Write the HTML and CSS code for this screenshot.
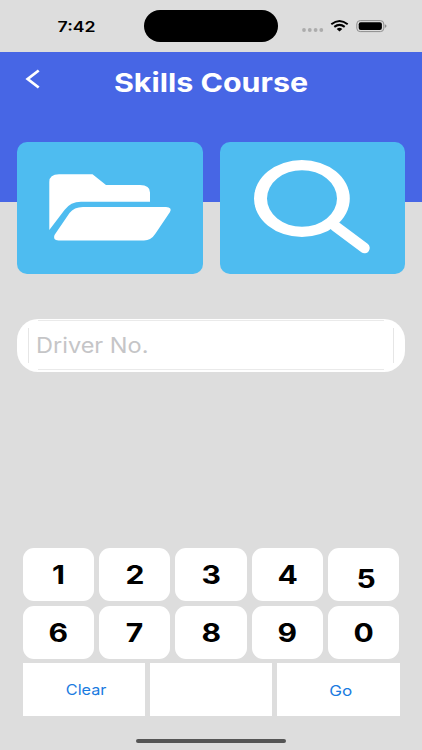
FILE: index.html
```html
<!DOCTYPE html>
<html lang="en">
<head>
    <meta charset="UTF-8">
    <meta name="viewport" content="width=device-width, initial-scale=1.0">
    <title>Skills Course</title>
    <link rel="stylesheet" href="styles.css">
</head>
<body>
    <div class="screen">
        <div class="status-bar">
            <div class="time"><span class="wide">7:42</span></div>
            <div class="island"></div>
            <svg class="status-icons" width="88" height="20" viewBox="0 0 88 20">
                <g fill="#acacac">
                    <circle cx="5" cy="14" r="1.9"/>
                    <circle cx="10.8" cy="14" r="1.9"/>
                    <circle cx="16.6" cy="14" r="1.9"/>
                    <circle cx="22.3" cy="14" r="1.9"/>
                </g>
                <g fill="none" stroke="#000" stroke-width="2">
                    <path d="M32.3 8.3Q40.5 1.7 48.7 8.3"/>
                    <path d="M35.3 10.9Q40.5 6.9 45.7 10.9"/>
                </g>
                <path d="M37.7 12.9Q40.5 10.8 43.3 12.9L40.5 15.4Z"/>
                <rect x="57.8" y="4.6" width="27" height="11" rx="3.4" fill="none" stroke="#8d8d8d"/>
                <rect x="59.7" y="6.2" width="23.2" height="7.8" rx="2"/>
                <path d="M85.9 8.2Q87.5 8.9 87.5 10.1Q87.5 11.3 85.9 12Z" fill="#8d8d8d"/>
            </svg>
        </div>

        <div class="header">
            <svg class="back" width="16" height="22" viewBox="0 0 16 22">
                <path d="M13.7 2.5L2.7 11L13.7 19.5" fill="none" stroke="#fff" stroke-width="2.8"/>
            </svg>
            <h1><span class="wide">Skills Course</span></h1>
        </div>

        <div class="cards">
            <div class="card">
                <svg width="185" height="132" viewBox="0 0 185 132" fill="#fff">
                    <path d="M32.3 88V40Q32.3 32.3 42 32.3H75.5L89 43H123Q133 43 133 50.5V59.7H64Q53.5 59.7 47.5 68Z"/>
                    <path d="M52.5 71Q57 65 66 65H149Q155.5 65.3 153 70L138.5 91.5Q134 98.5 127 98.5H41.5Q35.5 98 37.5 93Z"/>
                </svg>
            </div>
            <div class="card">
                <svg width="185" height="132" viewBox="0 0 185 132">
                    <path d="M115 84L144.5 106" stroke="#fff" stroke-width="10.5" stroke-linecap="round"/>
                    <path fill="#fff" fill-rule="evenodd" d="M34 56.5a47.9 38.5 0 1 0 95.8 0a47.9 38.5 0 1 0 -95.8 0zM47 56.5a35 28.3 0 1 0 70 0a35 28.3 0 1 0 -70 0z"/>
                </svg>
            </div>
        </div>

        <div class="driver">
            <div class="driver-field"><span class="wide">Driver No.</span></div>
        </div>

        <div class="keypad">
            <div class="key"><span class="wide">1</span></div>
            <div class="key"><span class="wide">2</span></div>
            <div class="key"><span class="wide">3</span></div>
            <div class="key"><span class="wide">4</span></div>
            <div class="key key-five"><span class="wide">5</span></div>
            <div class="key"><span class="wide">6</span></div>
            <div class="key"><span class="wide">7</span></div>
            <div class="key"><span class="wide">8</span></div>
            <div class="key"><span class="wide">9</span></div>
            <div class="key"><span class="wide">0</span></div>
        </div>
        <div class="actions">
            <div class="action action-clear"><span class="wide">Clear</span></div>
            <div class="action"></div>
            <div class="action action-go"><span class="wide">Go</span></div>
        </div>

        <div class="home-bar"></div>
    </div>
</body>
</html>
```
FILE: styles.css
```css
* {
    box-sizing: border-box;
}
body {
    margin: 0;
    font-family: Inter, "Liberation Sans", sans-serif;
    background: #ddd;
}
.screen {
    width: 422px;
    height: 750px;
    overflow: hidden;
    background: #ddd;
}
.wide {
    display: inline-block;
    transform: scaleX(1.18);
}
.status-bar {
    display: grid;
    grid-template-columns: 144px 134px 144px;
    align-items: center;
    height: 52px;
}
.time {
    padding-left: 10px;
    text-align: center;
    font-size: 14.5px;
    font-weight: 600;
}
.time .wide {
    transform: scaleX(1.22);
}
.island {
    height: 32px;
    border-radius: 16px;
    background: #000;
}
.status-icons {
    margin-left: 21px;
}
.header {
    display: grid;
    grid-template-columns: 48px 1fr 48px;
    height: 149.5px;
    padding-top: 16px;
    background: #4766e5;
    color: #fff;
}
.back {
    margin: 0 0 0 25px;
}
h1 {
    margin: -1px 0 0;
    text-align: center;
    font-size: 26px;
    font-weight: 700;
    line-height: 32px;
}
h1 .wide {
    transform: scaleX(1.17);
}
.cards {
    display: grid;
    grid-template-columns: 1fr 1fr;
    gap: 17px;
    margin-top: -59.5px;
    padding: 0 17px;
}
.card {
    height: 132px;
    border-radius: 10px;
    background: #4ebcf0;
}
.card svg {
    display: block;
}
.driver {
    height: 53px;
    margin: 45px 17px 0;
    padding: 9px 11px;
    border-radius: 21px;
    background:
        linear-gradient(#eaeaea, #eaeaea) center 1px / 346px 1px no-repeat,
        linear-gradient(#eaeaea, #eaeaea) center 50px / 346px 1px no-repeat,
        #fff;
}
.driver-field {
    height: 35px;
    padding-left: 7px;
    border: solid #e6e6e6;
    border-width: 0 1px;
    color: #c5c5c7;
    font-size: 21px;
    line-height: 35px;
}
.driver-field .wide {
    transform: scaleX(1.12);
    transform-origin: left;
}
.keypad {
    display: grid;
    grid-template-columns: repeat(5, 1fr);
    gap: 4.5px 5.3px;
    margin: 176px 22.5px 0;
}
.key {
    height: 53px;
    border-radius: 11px;
    background: #fff;
    text-align: center;
    font-size: 25.5px;
    font-weight: 700;
    line-height: 53px;
}
.key-five {
    padding: 4px 0 0 4px;
}
.actions {
    display: grid;
    grid-template-columns: repeat(3, 1fr);
    gap: 5px;
    margin: 4px 22.5px 0;
}
.action {
    height: 53px;
    background: #fff;
    color: #1a7be0;
    text-align: center;
    font-size: 14.5px;
    line-height: 54px;
}
.action-clear {
    padding-left: 4px;
}
.action-clear .wide {
    transform: scaleX(1.12);
}
.action-go {
    padding: 1px 0 0 5px;
}
.home-bar {
    width: 150px;
    height: 4px;
    margin: 23px auto 0;
    border-radius: 2px;
    background: #555;
}
```
